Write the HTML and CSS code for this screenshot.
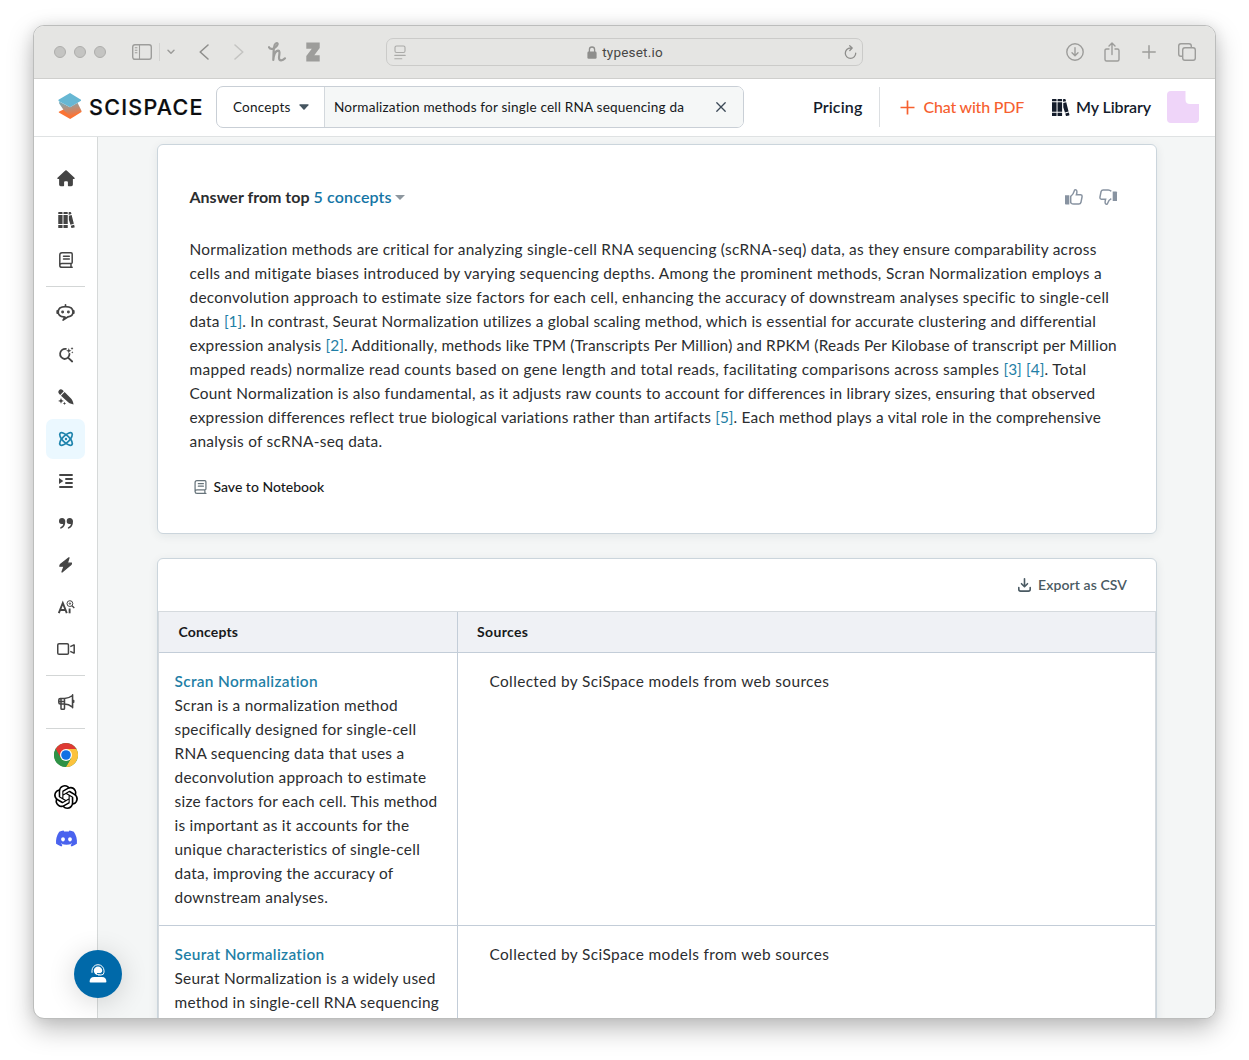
FILE: index.html
```html
<!DOCTYPE html>
<html lang="en">
<head>
<meta charset="utf-8">
<title>SciSpace – Concepts</title>
<link rel="stylesheet" href="styles.css">
</head>
<body>
<div class="window">
  <div class="toolbar">
    <div class="tools-left">
      <i class="light"></i><i class="light"></i><i class="light"></i>
      <svg class="t-side" width="20" height="16" viewBox="0 0 20 16" fill="none" stroke="#9d9d9b" stroke-width="1.4"><rect x=".7" y=".7" width="18.6" height="14.6" rx="2.2"/><path d="M7.5 1v14M2.8 3.7h2.6M2.8 6.2h2.6M2.8 8.7h2.6" stroke-width="1.1"/></svg>
      <i class="t-divider"></i>
      <svg class="t-chev" width="8" height="6" viewBox="0 0 8 6" fill="none" stroke="#9d9d9b" stroke-width="1.5" stroke-linecap="round" stroke-linejoin="round"><path d="M1 1.2l3 3 3-3"/></svg>
      <svg class="t-back" width="10" height="16" viewBox="0 0 10 16" fill="none" stroke="#8f8f8d" stroke-width="1.6" stroke-linecap="round" stroke-linejoin="round"><path d="M9 1L1.200 8 9 15"/></svg>
      <svg class="t-fwd" width="10" height="16" viewBox="0 0 10 16" fill="none" stroke="#c4c4c2" stroke-width="1.6" stroke-linecap="round" stroke-linejoin="round"><path d="M1 1l7.800 7L1 15"/></svg>
      <svg class="t-honey" width="18" height="20" viewBox="0 0 18 20" fill="none" stroke="#9d9d9b" stroke-width="2.2" stroke-linecap="round" stroke-linejoin="round"><path d="M1 5.200C2.200 7.600 5 7 7.300 5.300 9.800 3.500 10.400 1.100 8.700 1 6.500 1 5.700 6 5.600 10l-.3 8C5.800 13 7.700 9 10 8.700c2.600-.2 1 4.500 1 7 0 3.600 3.600 3.300 6 .6"/></svg>
      <svg class="t-z" width="14" height="20" viewBox="0 0 14 20" fill="#9d9d9b"><path d="M.3.500h13.400V6L8.300 13.200h5.400v6.300H.3V14l5.500-7.200H.3z"/></svg>
    </div>
    <div class="address">
      <svg width="12" height="15" viewBox="0 0 12 15" fill="none" stroke="#aaaaa8" stroke-width="1.1" stroke-linecap="round"><rect x="1" y="1" width="10" height="6.500" rx="1.500"/><path d="M.8 10.400h10.400M.8 13.700h7"/></svg>
      <span class="host"><svg width="10" height="13" viewBox="0 0 10 13"><path d="M2.400 6V3.600a2.600 2.600 0 015.200 0V6" fill="none" stroke="#8e8e8c" stroke-width="1.300"/><rect x=".4" y="5.600" width="9.200" height="7.200" rx="1.300" fill="#8e8e8c"/></svg><span>typeset.io</span></span>
      <svg width="13" height="15" viewBox="0 0 13 15" fill="none" stroke="#8e8e8c" stroke-width="1.300" stroke-linecap="round" stroke-linejoin="round"><path d="M11.700 8.200A5.200 5.200 0 116.500 3h1.300M5.700.8l2.500 2.200-2.400 2.500"/></svg>
    </div>
    <div class="tools-right">
      <svg class="t-down" width="18" height="18" viewBox="0 0 18 18" fill="none" stroke="#9d9d9b" stroke-width="1.400" stroke-linecap="round" stroke-linejoin="round"><circle cx="9" cy="9" r="8.200"/><path d="M9 4.800v7.800M6 9.800l3 3 3-3"/></svg>
      <svg width="16" height="20" viewBox="0 0 16 20" fill="none" stroke="#9d9d9b" stroke-width="1.400" stroke-linecap="round" stroke-linejoin="round"><path d="M5 7H2.600Q1 7 1 8.500v9Q1 19 2.600 19h10.800q1.600 0 1.600-1.500v-9Q15 7 13.400 7H11M8 12.500V1.200M5 4l3-3 3 3"/></svg>
      <svg width="14" height="14" viewBox="0 0 14 14" fill="none" stroke="#9d9d9b" stroke-width="1.500" stroke-linecap="round"><path d="M7 .8v12.400M.8 7h12.400"/></svg>
      <svg width="18" height="18" viewBox="0 0 18 18" fill="none" stroke="#9d9d9b" stroke-width="1.400" stroke-linejoin="round"><rect x="4.700" y="4.700" width="12.600" height="12.600" rx="2.200"/><path d="M4.500 13.300H2.900Q.7 13.300.7 11V2.900Q.7.700 2.900.7H11q2.300 0 2.300 2.200v1.600"/></svg>
    </div>
  </div>

  <div class="header">
    <div class="logo">
      <svg width="24" height="27" viewBox="0 0 24 27"><defs><linearGradient id="fold" x1="0" y1="0" x2=".3" y2="1"><stop offset="0" stop-color="#6cb0c6"/><stop offset="1" stop-color="#f3763f"/></linearGradient></defs><path d="M.8 18.700L6 16.200l17.500 1.800v1L12.200 26 .8 19.500z" fill="#fb7434"/><path d="M1.200 8.500L12 14.300l7.500-4.500 4 8L12.500 23.500 5.800 17.200 1.200 10.500z" fill="url(#fold)"/><path d="M12 0l11 6.700v1L12 14.200.5 8V6.700z" fill="#67b7d3"/></svg>
      <span class="wordmark">SCISPACE</span>
    </div>
    <div class="search">
      <div class="scope"><span>Concepts</span><svg width="10" height="6" viewBox="0 0 10 6"><path d="M.8.3h8.400q.7.200.2.900L5.600 5.400q-.6.600-1.200 0L.6 1.200Q.1.500.8.300z" fill="#455560"/></svg></div>
      <div class="query"><span>Normalization methods for single cell RNA sequencing da</span><svg width="10" height="10" viewBox="0 0 10 10" stroke="#3b4856" stroke-width="1.300" stroke-linecap="round"><path d="M.8.8l8.400 8.400M9.200.8L.8 9.200"/></svg></div>
    </div>
    <div class="nav">
      <span class="pricing">Pricing</span>
      <span class="chat"><svg width="15" height="15" viewBox="0 0 15 15" stroke="#f6602f" stroke-width="1.700"><path d="M7.500.5v14M.5 7.500h14"/></svg><span>Chat with PDF</span></span>
      <span class="library"><svg width="17" height="17" viewBox="0 0 16 16" fill="#141c2b"><path d="M.5 0h3.300q.5 0 .5.500V2H0V.5Q0 0 .5 0zM0 3h4.300v9H0zM0 13h4.300v2.500q0 .5-.5.500H.5q-.5 0-.5-.5zM5.700 0H9q.5 0 .5.500V2H5.200V.500q0-.5.500-.5zM5.200 3h4.300v9H5.200zM5.200 13h4.300v2.500q0 .5-.5.500H5.700q-.5 0-.5-.5zM10.400.6q0-.5.500-.6h1.300q.4 0 .6.500l.4 1.500-2.800.7zM10.600 3.700l2.800-.7 2.200 8.800-3.400.9-1.600-5zM12.500 13.700l3.400-.9.500 2.100q0 .5-.4.600l-2.400.5q-.5 0-.6-.5z"/></svg><span>My Library</span></span>
      <span class="avatar"></span>
    </div>
  </div>

  <div class="body">
    <div class="sidebar">
      <a><svg width="18" height="17" viewBox="0 0 18 17" fill="#444"><path d="M8.300.6q.7-.6 1.400 0l7.800 7.100q.6.700 0 1-.2.200-.6.200h-1v5.700q0 1.600-1.600 1.600h-2.700q-.7 0-.7-.7v-3.200q0-1-1-1H8.100q-1 0-1 1v3.200q0 .7-.7.700H3.700q-1.600 0-1.600-1.600V8.900h-1q-.4 0-.6-.2-.6-.3 0-1z"/></svg></a>
      <a><svg width="17" height="16" viewBox="0 0 16.500 16" fill="#444"><path d="M.5 0h3.300q.5 0 .5.500V2H0V.5Q0 0 .5 0zM0 3h4.300v9H0zM0 13h4.300v2.500q0 .5-.5.500H.5q-.5 0-.5-.5zM5.700 0H9q.5 0 .5.500V2H5.200V.500q0-.5.500-.5zM5.200 3h4.300v9H5.200zM5.200 13h4.300v2.500q0 .5-.5.500H5.700q-.5 0-.5-.5zM10.400.6q0-.5.500-.6h1.300q.4 0 .6.500l.4 1.500-2.800.7zM10.600 3.700l2.800-.7 2.200 8.800-3.400.9-1.600-5zM12.500 13.700l3.400-.9.500 2.100q0 .5-.4.600l-2.400.5q-.5 0-.6-.5z"/></svg></a>
      <a class="notebook"><svg width="14" height="16" viewBox="0 0 14 16" fill="none" stroke="#444" stroke-width="1.500" stroke-linecap="round"><path d="M.8 13.500V3Q.8.800 3 .8h9q1.200 0 1.200 1.200v8.400q0 1-1.200 1H3q-2.200 0-2.200 2 0 1.900 2.200 1.900h10.200M12 11.600v3.500M4.500 4.200h5.800M4.500 7h5.800"/></svg></a>
      <hr>
      <a class="bot"><svg width="19" height="17" viewBox="0 0 19 17" fill="none" stroke="#444" stroke-width="1.700" stroke-linecap="round" stroke-linejoin="round"><path d="M9.500.8v1.700M9.500 2.700C4.500 2.700 2.200 4.600 2.200 8c0 2.800 1.900 4.600 5.600 4.900l1.200.1-1.900 3.100 5-3.300c3.300-.4 4.900-2.200 4.900-4.800 0-3.400-2.500-5.300-7.500-5.300zM1.200 6.900v2.200M17.800 6.900v2.200"/><circle cx="6.600" cy="8" r=".6" fill="#444"/><circle cx="12.400" cy="8" r=".6" fill="#444"/></svg></a>
      <a><svg width="16" height="16" viewBox="0 0 16 16" fill="none" stroke="#444" stroke-width="1.800" stroke-linecap="round"><path d="M7.900 1.900A5 5 0 106.500 12a5.300 5.300 0 005-5.100M10.300 10.800l3.900 3.700"/><path d="M10.800 1l.7 2 2 .7-2 .7-.7 2-.7-2-2-.7 2-.7zM14 .1l.5 1 .9.400-.9.500-.5 1-.4-1-1-.5 1-.4zM14.300 4.300l.3.800.8.300-.8.300-.3.800-.3-.8-.8-.3.800-.3z" fill="#444" stroke="none"/></svg></a>
      <a><svg width="16" height="16" viewBox="0 0 16 16" fill="#444"><path d="M1 1.200Q2.800-.6 4.600 1.100L5.800 2.300 2.200 6 1 4.800Q-.6 3 1 1.200zM6.600 3.100l6.900 6.900q1 1.300 1.500 3l.6 2.400-2.400-.6q-1.800-.4-3-1.500L3 6.700zM3 9l.8 2 2.100.9-2.100.8L3 14.800l-.8-2.100-2.100-.8 2.100-.900zM6.500 12.700l.5 1.200 1.200.5-1.200.5-.5 1.100-.5-1.100-1.200-.5 1.200-.5z"/></svg></a>
      <a class="active"><svg width="16" height="16" viewBox="0 0 16 16" fill="none" stroke="#1f84ad" stroke-width="1.700"><ellipse cx="8" cy="8" rx="3.400" ry="8.200" transform="rotate(45 8 8)"/><ellipse cx="8" cy="8" rx="3.400" ry="8.200" transform="rotate(-45 8 8)"/><circle cx="8" cy="8" r="1.200" fill="#1f84ad" stroke="none"/></svg></a>
      <a><svg width="14" height="14" viewBox="0 0 14 14"><path d="M1 1h12M7 5h6M7 9h6M1 13h12" stroke="#444" stroke-width="1.900" stroke-linecap="round"/><path d="M0 4l4.300 3L0 10z" fill="#444"/></svg></a>
      <a><svg width="14" height="11" viewBox="0 0 14 11" fill="#444"><path id="q" d="M3 0a3 3 0 00-3 3 2.800 2.800 0 002.800 3h1.400C4 7.500 3 8.500 1.500 9.200q-.6.400-.3 1 .3.700 1.100.4C5 9.600 6.300 7 6.300 3.500A3.200 3.200 0 003 0z"/><use href="#q" x="7.700"/></svg></a>
      <a class="bolt"><svg width="13" height="16" viewBox="0 0 13 16" fill="#444" stroke="#444" stroke-width="1.300" stroke-linejoin="round"><path d="M10 .8L1.400 7.600.8 9.200h4.300L3 15l9-7.400.4-1.400H8.200z"/></svg></a>
      <a><svg width="17" height="14" viewBox="0 0 17 14" fill="none" stroke="#444"><path d="M.8 13.200L4.800 3l4 10.200M2.300 10h5" stroke-width="1.900"/><path d="M11.600 8.500v4.800" stroke-width="1.900"/><circle cx="11.900" cy="3.600" r="2.900" stroke-width="1"/><circle cx="11.900" cy="3.600" r=".7" stroke-width="1"/><path d="M14 5.800L16.300 8" stroke-width="1.300"/></svg></a>
      <a><svg width="18" height="12" viewBox="0 0 18 12" fill="none" stroke="#444" stroke-width="1.500" stroke-linejoin="round"><rect x=".75" y=".75" width="10.700" height="10.500" rx="1.300"/><path d="M13.300 3.600l3.100-1.500h.8v7.800h-.8l-3.100-1.500"/></svg></a>
      <hr>
      <a><svg width="17" height="16" viewBox="0 0 17 16" fill="none" stroke="#444" stroke-width="1.500" stroke-linejoin="round" stroke-linecap="round"><path d="M6.500 4.500H2.300Q.8 4.500.8 6v2.600q0 1.500 1.500 1.500h4.200q4 0 8 3V1.500q-4 3-8 3zM6.500 4.500v10Q6.500 15.300 5.600 15.300H3.900Q3 15.300 3 14.500v-10M1 7.500h5.500M14.600.8v13M15.700 6.500v1.700"/></svg></a>
      <hr>
      <a><svg width="24" height="24" viewBox="0 0 24 24"><circle cx="12" cy="12" r="12" fill="#2f9246"/><path d="M1.600 6A12 12 0 0122.400 6H12z" fill="#de3a33"/><path d="M22.400 6A12 12 0 0111.900 24L17.200 15 12 6z" fill="#fcc23c"/><path d="M1.600 6L6.800 15 12 8V6z" fill="#de3a33"/><path d="M22.400 6H12v3l5.200 6z" fill="#fcc23c"/><path d="M1.600 6L6.800 15l5.200 2.500 5.200-2.500-5.300 9A12 12 0 011.600 6z" fill="#2f9246"/><circle cx="12" cy="12" r="6" fill="#fff"/><circle cx="12" cy="12" r="4.800" fill="#1170e4"/></svg></a>
      <a><svg width="24" height="24" viewBox="0 0 24 24"><path d="M22.2819 9.8211a5.9847 5.9847 0 0 0-.5157-4.9108 6.0462 6.0462 0 0 0-6.5098-2.9A6.0651 6.0651 0 0 0 4.9807 4.1818a5.9847 5.9847 0 0 0-3.9977 2.9 6.0462 6.0462 0 0 0 .7427 7.0966 5.98 5.98 0 0 0 .511 4.9107 6.051 6.051 0 0 0 6.5146 2.9001A5.9847 5.9847 0 0 0 13.2599 24a6.0557 6.0557 0 0 0 5.7718-4.2058 5.9894 5.9894 0 0 0 3.9977-2.9001 6.0557 6.0557 0 0 0-.7475-7.0729zm-9.022 12.6081a4.4755 4.4755 0 0 1-2.8764-1.0408l.1419-.0804 4.7783-2.7582a.7948.7948 0 0 0 .3927-.6813v-6.7369l2.02 1.1686a.071.071 0 0 1 .038.052v5.5826a4.504 4.504 0 0 1-4.4945 4.4944zm-9.6607-4.1254a4.4708 4.4708 0 0 1-.5346-3.0137l.142.0852 4.783 2.7582a.7712.7712 0 0 0 .7806 0l5.8428-3.3685v2.3324a.0804.0804 0 0 1-.0332.0615L9.74 19.9502a4.4992 4.4992 0 0 1-6.1408-1.6464zM2.3408 7.8956a4.485 4.485 0 0 1 2.3655-1.9728V11.6a.7664.7664 0 0 0 .3879.6765l5.8144 3.3543-2.0201 1.1685a.0757.0757 0 0 1-.071 0l-4.8303-2.7865A4.504 4.504 0 0 1 2.3408 7.872zm16.5963 3.8558L13.1038 8.364 15.1192 7.2a.0757.0757 0 0 1 .071 0l4.8303 2.7913a4.4944 4.4944 0 0 1-.6765 8.1042v-5.6772a.79.79 0 0 0-.407-.667zm2.0107-3.0231l-.142-.0852-4.7735-2.7818a.7759.7759 0 0 0-.7854 0L9.409 9.2297V6.8974a.0662.0662 0 0 1 .0284-.0615l4.8303-2.7866a4.4992 4.4992 0 0 1 6.6802 4.66zM8.3065 12.863l-2.02-1.1638a.0804.0804 0 0 1-.038-.0567V6.0742a4.4992 4.4992 0 0 1 7.3757-3.4537l-.142.0805L8.704 5.459a.7948.7948 0 0 0-.3927.6813zm1.0976-2.3654l2.602-1.4998 2.6069 1.4998v2.9994l-2.5974 1.4997-2.6067-1.4997Z"/></svg></a>
      <a class="discord"><svg width="21" height="21" viewBox="0 0 24 24" fill="#4a63ee"><path d="M20.317 4.3698a19.7913 19.7913 0 00-4.8851-1.5152.0741.0741 0 00-.0785.0371c-.211.3753-.4447.8648-.6083 1.2495-1.8447-.2762-3.68-.2762-5.4868 0-.1636-.3933-.4058-.8742-.6177-1.2495a.077.077 0 00-.0785-.037 19.7363 19.7363 0 00-4.8852 1.515.0699.0699 0 00-.0321.0277C.5334 9.0458-.319 13.5799.0992 18.0578a.0824.0824 0 00.0312.0561c2.0528 1.5076 4.0413 2.4228 5.9929 3.0294a.0777.0777 0 00.0842-.0276c.4616-.6304.8731-1.2952 1.226-1.9942a.076.076 0 00-.0416-.1057c-.6528-.2476-1.2743-.5495-1.8722-.8923a.077.077 0 01-.0076-.1277c.1258-.0943.2517-.1923.3718-.2914a.0743.0743 0 01.0776-.0105c3.9278 1.7933 8.18 1.7933 12.0614 0a.0739.0739 0 01.0785.0095c.1202.099.246.1981.3728.2924a.077.077 0 01-.0066.1276 12.2986 12.2986 0 01-1.873.8914.0766.0766 0 00-.0407.1067c.3604.698.7719 1.3628 1.225 1.9932a.076.076 0 00.0842.0286c1.961-.6067 3.9495-1.5219 6.0023-3.0294a.077.077 0 00.0313-.0552c.5004-5.177-.8382-9.6739-3.5485-13.6604a.061.061 0 00-.0312-.0286zM8.02 15.3312c-1.1825 0-2.1569-1.0857-2.1569-2.419 0-1.3332.9555-2.4189 2.157-2.4189 1.2108 0 2.1757 1.0952 2.1568 2.419 0 1.3332-.9555 2.4189-2.1569 2.4189zm7.9748 0c-1.1825 0-2.1569-1.0857-2.1569-2.419 0-1.3332.9554-2.4189 2.1569-2.4189 1.2108 0 2.1757 1.0952 2.1568 2.419 0 1.3332-.946 2.4189-2.1568 2.4189Z"/></svg></a>
    </div>

    <div class="content">
      <div class="card answer">
        <div class="answer-head">
          <div class="answer-title"><b>Answer from top</b> <a>5 concepts</a><i class="caret"></i></div>
          <div class="votes">
            <svg width="18" height="16" viewBox="0 0 18 16"><path d="M0 6.200h4.300V15.500H.8q-.8 0-.8-.8z" fill="#8893a1"/><path d="M5.700 7.300q2.700-2 3.500-5.200.5-1.700 1.800-1.200 1.600.8.400 4.900h4.300q1.600.3 1.400 1.800l-1.200 6q-.5 1.500-2 1.500H8.700q-1.500 0-3-1.400z" fill="none" stroke="#8893a1" stroke-width="1.500"/></svg>
            <svg width="18" height="16" viewBox="0 0 18 16"><g transform="rotate(180 9 8)"><path d="M0 4h4.300v9.500H.8q-.8 0-.8-.8z" fill="#8893a1"/><path d="M5.700 6.300q2.700-1.500 3.500-4.200.5-1.700 1.800-1.200 1.600.8.400 4.900h4.300q1.600.3 1.400 1.800l-1.200 6q-.5 1.500-2 1.500H8.700q-1.500 0-3-1.400" fill="none" stroke="#8893a1" stroke-width="1.500"/></g></svg>
          </div>
        </div>
        <p class="answer-text"><span>Normalization methods are critical for analyzing single-cell RNA sequencing (scRNA-seq) data, as they ensure comparability across</span><br><span>cells and mitigate biases introduced by varying sequencing depths. Among the prominent methods, Scran Normalization employs a</span><br><span>deconvolution approach to estimate size factors for each cell, enhancing the accuracy of downstream analyses specific to single-cell</span><br><span>data <a>[1]</a>. In contrast, Seurat Normalization utilizes a global scaling method, which is essential for accurate clustering and differential</span><br><span>expression analysis <a>[2]</a>. Additionally, methods like TPM (Transcripts Per Million) and RPKM (Reads Per Kilobase of transcript per Million</span><br><span>mapped reads) normalize read counts based on gene length and total reads, facilitating comparisons across samples <a>[3]</a> <a>[4]</a>. Total</span><br><span>Count Normalization is also fundamental, as it adjusts raw counts to account for differences in library sizes, ensuring that observed</span><br><span>expression differences reflect true biological variations rather than artifacts <a>[5]</a>. Each method plays a vital role in the comprehensive</span><br><span>analysis of scRNA-seq data.</span></p>
        <div class="save"><svg width="13" height="14" viewBox="0 0 14 16" fill="none" stroke="#66737a" stroke-width="1.400" stroke-linecap="round"><path d="M.8 13.500V3Q.8.800 3 .8h9q1.200 0 1.200 1.200v8.400q0 1-1.200 1H3q-2.200 0-2.200 2 0 1.900 2.200 1.900h10.200M12 11.600v3.500M4.500 4.200h5.800M4.500 7h5.800"/></svg><span>Save to Notebook</span></div>
      </div>

      <div class="card results">
        <div class="export"><svg width="13" height="14" viewBox="0 0 13 14" fill="none" stroke="#4a5a63" stroke-width="1.600" stroke-linecap="round" stroke-linejoin="round"><path d="M6.500.8v7.700M3.500 5.700l3 3 3-3M.8 9.500v1.800q0 1.800 1.800 1.800h7.800q1.800 0 1.800-1.800V9.500"/></svg><span>Export as CSV</span></div>
        <div class="grid">
          <div class="th">Concepts</div><div class="th">Sources</div>
          <div class="td concept"><a>Scran Normalization</a><br>Scran is a normalization method<br>specifically designed for single-cell<br>RNA sequencing data that uses a<br>deconvolution approach to estimate<br>size factors for each cell. This method<br>is important as it accounts for the<br>unique characteristics of single-cell<br>data, improving the accuracy of<br>downstream analyses.</div>
          <div class="td source">Collected by SciSpace models from web sources</div>
          <div class="td concept"><a>Seurat Normalization</a><br>Seurat Normalization is a widely used<br>method in single-cell RNA sequencing</div>
          <div class="td source">Collected by SciSpace models from web sources</div>
        </div>
      </div>
    </div>
  </div>
  <div class="support"><svg width="18" height="20" viewBox="0 0 18 20"><path d="M1.500 18.500q-.9 0-.9-.8 0-4.500 4.500-4.700h7.800q4.500.2 4.500 4.700 0 .8-.9.800z" fill="#fff"/><circle cx="9" cy="6.700" r="4.200" fill="#fff"/><path d="M3 8.800V6.700a6 6 0 0112 0v1.500q0 2.800-3 2.800H9" fill="none" stroke="#fff" stroke-width="1"/><path d="M8 9.600h3q2.200 0 2.700-2.300" fill="none" stroke="#0069a9" stroke-width="1"/></svg></div>
</div>
</body>
</html>
```

FILE: styles.css
```css
* { box-sizing: border-box; }
html, body { height: 100%; }
body {
  margin: 0;
  padding: 25px 33px;
  background: #fff;
  overflow: hidden;
  font-family: Lato, "Liberation Sans", sans-serif;
  color: #2b2d2f;
}
svg { display: block; flex: none; overflow: visible; }
a { color: #1f7fa6; text-decoration: none; }

.window {
  position: relative;
  width: 1183px;
  height: 994px;
  border: 1px solid #bcbdbc;
  border-radius: 11px;
  background: #fff;
  box-shadow: 0 10px 26px rgba(0, 0, 0, .26), 0 0 14px rgba(0, 0, 0, .08);
  overflow: hidden;
  display: flex;
  flex-direction: column;
}

/* browser toolbar */
.toolbar {
  height: 53px;
  flex: none;
  background: #e5e5e3;
  border-bottom: 1px solid #cfcfcd;
  display: flex;
  align-items: center;
  padding-right: 19px;
}
.tools-left { width: 352px; display: flex; align-items: center; padding-left: 20px; }
.light { width: 12px; height: 12px; border-radius: 50%; background: #c4c4c2; border: 1px solid #aeaeac; margin-right: 8px; }
.t-side { margin-left: 18px; }
.t-divider { width: 1px; height: 18px; background: #d3d3d1; margin: 0 7px 0 7px; }
.t-back { margin-left: 23.5px; }
.t-fwd { margin-left: 25px; }
.t-honey { margin-left: 24px; }
.t-z { margin-left: 20px; }
.address {
  width: 477px;
  height: 28px;
  border: 1px solid #cbcbc9;
  border-radius: 7px;
  display: flex;
  align-items: center;
  justify-content: space-between;
  padding: 0 5px 0 7px;
}
.host { display: flex; align-items: center; gap: 5px; font: 13.5px Roboto, sans-serif; letter-spacing: .2px; color: #474745; }
.tools-right { margin-left: auto; display: flex; align-items: center; gap: 22px; }
.t-down { margin-right: -2px; }

/* site header */
.header {
  height: 58px;
  flex: none;
  border-bottom: 1px solid #dfe2e3;
  display: flex;
  align-items: flex-start;
  padding: 7px 16px 0 24px;
}
.logo { width: 158px; height: 41px; display: flex; align-items: center; gap: 7px; }
.wordmark { font: 500 21.5px/28px Inter, sans-serif; letter-spacing: 1.25px; color: #0b0d10; -webkit-text-stroke: .2px #0b0d10; }
.search { width: 528px; height: 42px; border: 1px solid #c9cfd6; border-radius: 7px; display: flex; font-size: 13.6px; letter-spacing: .18px; color: #17191b; overflow: hidden; }
.search span { margin-top: -1px; }
.scope { width: 107px; display: flex; align-items: center; gap: 8px; padding-left: 16px; }
.query { flex: 1; display: flex; align-items: center; justify-content: space-between; background: #f5f7f7; border-left: 1px solid #d3d8dd; padding: 0 17px 0 9px; }
.nav { flex: 1; display: flex; align-items: center; height: 42px; font-size: 16px; font-weight: 600; color: #141c2b; justify-content: flex-end; }
.pricing { height: 40px; line-height: 39px; padding-right: 17px; border-right: 1px solid #dcdfe2; letter-spacing: .15px; }
.chat { display: flex; align-items: center; gap: 8px; margin-left: 20px; color: #f6602f; font-weight: 500; letter-spacing: -.2px; }
.library { display: flex; align-items: center; gap: 7px; margin-left: 28px; letter-spacing: -.12px; }
.chat span, .library span { margin-top: -1px; }
.avatar { width: 32px; height: 32px; margin-left: 16px; border-radius: 4px; background: #efd5f9; clip-path: path("M0 0H18.5V8.5Q18.5 13 23 13H32V32H0z"); }

.body { flex: 1; min-height: 0; display: flex; }
.sidebar { width: 64px; flex: none; border-right: 1px solid #d6d9d9; padding: 21px 12px 0; display: flex; flex-direction: column; gap: 2px; }
.sidebar a { height: 40px; flex: none; display: flex; align-items: center; justify-content: center; border-radius: 7px; padding-left: 1px; }
.sidebar a.notebook { margin-top: -2px; }
.sidebar a.bot { padding: 0 0 1px; }
.sidebar a.bolt { padding-left: 0; }
.sidebar a.active { background: #ebf8ff; }
.sidebar a.discord { padding-bottom: 1px; }
.sidebar hr { width: 100%; height: 1px; flex: none; border: 0; background: #d3d6d6; margin: 4px 0; }

.content { flex: 1; background: #f4f6f6; padding: 7px 58px 0 59px; overflow: hidden; }
.card { width: 1000px; background: #fff; border: 1px solid #cbd5dc; border-radius: 6px; box-shadow: 0 2px 10px rgba(30, 50, 60, .08); }
.answer { height: 390px; padding: 40px 39px 0 31.5px; font-size: 16px; }
.answer-head { height: 24px; display: flex; justify-content: space-between; align-items: center; }
.answer-title { line-height: 24px; font-weight: 600; }
.answer-title b { font-weight: 700; }
.answer-title a { color: #1475a5; letter-spacing: .15px; }
.caret { display: inline-block; border: 5px solid transparent; border-top-color: #8d979f; border-bottom: 0; margin-left: 3px; vertical-align: 3px; }
.votes { display: flex; gap: 16px; }

/* tracking is tuned line by line so that every line keeps its measure */
.answer-text { margin: 28px 0 0; font-size: 15.4px; line-height: 24px; white-space: nowrap; letter-spacing: .27px; }
.answer-text a { letter-spacing: 0; }
.answer-text span:nth-of-type(2) { letter-spacing: .303px; }
.answer-text span:nth-of-type(3) { letter-spacing: .275px; }
.answer-text span:nth-of-type(4) { letter-spacing: .22px; }
.answer-text span:nth-of-type(5) { letter-spacing: .19px; }
.answer-text span:nth-of-type(6) { letter-spacing: .325px; }
.answer-text span:nth-of-type(7) { letter-spacing: .225px; }
.answer-text span:nth-of-type(8) { letter-spacing: .217px; }
.save { display: flex; align-items: center; gap: 7px; margin: 24px 0 0 4px; font-size: 14px; line-height: 20px; color: #17191b; font-weight: 500; }

.results { margin-top: 24px; border-radius: 6px 6px 0 0; }
.export { height: 52px; display: flex; align-items: center; justify-content: flex-end; gap: 7px; padding: 0 29px 1px 0; font-size: 14px; font-weight: 600; letter-spacing: .08px; color: #4a5a63; }
.grid { display: grid; grid-template-columns: 299px 1fr; border: 1px solid #d5dade; border-bottom: 0; }
.th { height: 41px; line-height: 40px; background: #eff1f5; border-bottom: 1px solid #c3cdd8; padding-left: 19.5px; font-size: 14px; font-weight: 700; letter-spacing: .15px; color: #17191b; }
.th:nth-child(even) { padding-left: 19px; letter-spacing: .35px; }
.th:nth-child(odd), .td:nth-child(odd) { border-right: 1px solid #c3cdd8; }
.td { border-bottom: 1px solid #c3cdd8; font-size: 15.4px; line-height: 24px; padding: 16px 15px 16px 15.5px; white-space: nowrap; letter-spacing: .27px; }
.td.source { padding-left: 31.5px; letter-spacing: .38px; }
.td a { font-weight: 600; letter-spacing: .33px; }

/* floating help button */
.support { position: absolute; left: 40px; top: 924px; width: 48px; height: 48px; border-radius: 50%; background: #0069a9; box-shadow: 0 4px 28px rgba(0, 0, 0, .16); display: flex; align-items: center; justify-content: center; }
```
